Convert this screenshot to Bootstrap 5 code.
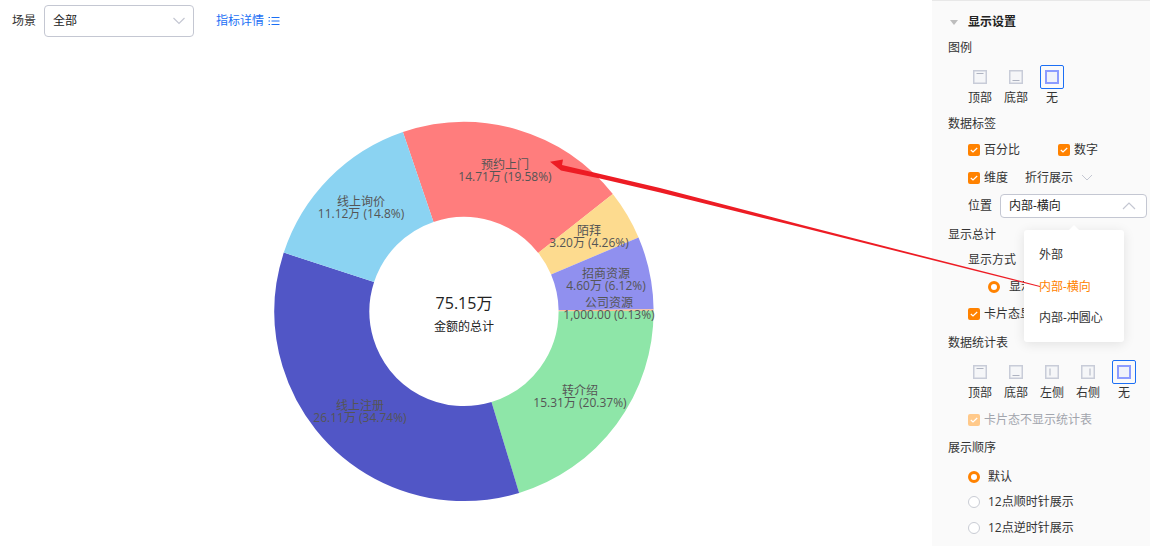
<!DOCTYPE html>
<html lang="zh">
<head>
<meta charset="utf-8">
<link href="https://cdn.jsdelivr.net/npm/bootstrap@5.3.0/dist/css/bootstrap.min.css" rel="stylesheet">
<style>
html,body{height:546px;overflow:hidden}
body{font-family:"Open Sans","Noto Sans CJK SC",sans-serif;font-size:12px;color:#333;background:#fff;position:relative}
.app-main{width:932px;flex:none}
.tool-bar{height:42px;padding:5px 0 5px 12px}
.fake-select{border:1px solid #c4c7d2;border-radius:4px;background:#fff;color:#222;display:flex;align-items:center;justify-content:space-between}
.scene-select{width:150px;height:32px;margin:0 22px 0 8px;padding:0 7px 0 8px}
.detail-link{color:#1b6ff5;text-decoration:none}
.chart-svg{display:block}
.chart-svg text{font-family:"Open Sans","Noto Sans CJK SC",sans-serif;font-size:12px;text-anchor:middle;fill:#555}
.chart-svg .total-num{font-size:16px;fill:#222}
.chart-svg .total-lbl{fill:#222}
.side-panel{width:218px;flex:none;height:546px;background:#fafafa;border-top:1px solid #e8e8e8;padding:1px 0 0 16px;overflow:hidden}
.srow{display:flex;align-items:center;white-space:nowrap}
.ind{padding-left:20px}
.panel-title{font-weight:700;height:40px;padding-left:2px;color:#222}
.panel-title i{display:block;width:0;height:0;border:4px solid transparent;border-top:5px solid #bdbdbd;border-bottom:0;margin-right:10px}
.cbx{width:12px;height:12px;border-radius:2px;background:#ff8200;margin-right:4px;display:flex;align-items:center;justify-content:center;flex:none}
.cbx.off{background:#ffc98a}
.rad{width:12px;height:12px;border-radius:50%;border:1px solid #c9ccd4;background:#fff;margin-right:8px;flex:none}
.rad.on{border:3px solid #ff8200}
.pos-icons{display:flex;padding-left:14px}
.pos-item{width:36px;display:flex;flex-direction:column;align-items:center}
.pos-box{width:24px;height:24px;display:flex;align-items:center;justify-content:center;border-radius:2px}
.pos-box.sel{border:1px solid #1b6ff5}
.pos-select{width:147px;height:24px;padding:0 10px 0 8px}
.drop-menu{position:absolute;left:1024px;top:230px;width:100px;height:112px;background:#fff;border-radius:3px;box-shadow:0 2px 12px rgba(0,0,0,.1);padding:9px 0 0 15px}
.drop-menu::before{content:"";position:absolute;left:45px;top:-5px;border:5px solid transparent;border-bottom-color:#fff;border-top:0}
.drop-menu div{height:31.5px;line-height:32px;white-space:nowrap}
.drop-menu .act{color:#ff8200}
.over-arrow{position:absolute;left:0;top:0;pointer-events:none}
.dim{color:#a2a5ad}
.r-legend{height:12px}
.r-legend-icons{margin-top:11px}
.r-label-head{height:19px;margin-top:7px}
.r33{height:33px}
.r23{height:23px}
.r25{height:25px}
.r-radio{height:29px;padding-left:40px}
.r-radio .rad{margin-right:9px}
.r-card{height:26px}
.r32{height:32px}
.r-table-icons{margin-top:1px}
.r-nostat{height:32px;margin-top:2px}
.r-order{height:24px}
.r-order-first{height:25px;margin-top:4px}
.r26{height:26px}
.w41{width:41px}
.w32{width:32px}
.w74{width:74px}
</style>
</head>
<body>
<div class="d-flex">
  <div class="app-main">
    <div class="tool-bar d-flex align-items-center">
      <span>场景</span>
      <div class="fake-select scene-select"><span>全部</span>
        <svg width="14" height="8" viewBox="0 0 14 8"><path d="M1.5 1 7 6.5 12.5 1" fill="none" stroke="#c4c7d2" stroke-width="1.2"/></svg></div>
      <a class="detail-link d-flex align-items-center" href="#">指标详情
        <svg class="ms-1" width="12" height="10" viewBox="0 0 12 10"><path d="M3.5 1.5H11.5M3.5 5H11.5M3.5 8.5H11.5M.5 1.5H2M.5 5H2M.5 8.5H2" stroke="#1b6ff5" fill="none"/></svg></a>
    </div>
    <svg class="chart-svg" width="932" height="504" viewBox="0 42 932 504">
      <g fill="none" stroke-width="95">
        <circle cx="464" cy="311.5" r="142.1" pathLength="360" stroke="#ff7d7d" stroke-dasharray="70.5 289.5" transform="rotate(-108.8 464 311.5)"/>
        <circle cx="464" cy="311.5" r="142.1" pathLength="360" stroke="#fddb8f" stroke-dasharray="15.3 344.7" transform="rotate(-38.3 464 311.5)"/>
        <circle cx="464" cy="311.5" r="142.1" pathLength="360" stroke="#9090ef" stroke-dasharray="22.3 337.7" transform="rotate(-23 464 311.5)"/>
        <circle cx="464" cy="311.5" r="142.1" pathLength="360" stroke="#ffb98a" stroke-dasharray="0.5 359.5" transform="rotate(-0.7 464 311.5)"/>
        <circle cx="464" cy="311.5" r="142.1" pathLength="360" stroke="#8ee6a8" stroke-dasharray="73.3 286.7" transform="rotate(-0.2 464 311.5)"/>
        <circle cx="464" cy="311.5" r="142.1" pathLength="360" stroke="#5156c6" stroke-dasharray="125 235" transform="rotate(73.1 464 311.5)"/>
        <circle cx="464" cy="311.5" r="142.1" pathLength="360" stroke="#8bd3f2" stroke-dasharray="53.1 306.9" transform="rotate(198.1 464 311.5)"/>
      </g>
      <text x="505" y="169">预约上门</text><text x="505" y="181">14.71万 (19.58%)</text>
      <text x="361" y="206">线上询价</text><text x="361" y="218">11.12万 (14.8%)</text>
      <text x="589" y="235">陌拜</text><text x="589" y="247">3.20万 (4.26%)</text>
      <text x="606" y="278">招商资源</text><text x="606" y="290">4.60万 (6.12%)</text>
      <text x="609" y="307">公司资源</text><text x="609" y="319">1,000.00 (0.13%)</text>
      <text x="580" y="395">转介绍</text><text x="580" y="407">15.31万 (20.37%)</text>
      <text x="360" y="410">线上注册</text><text x="360" y="422">26.11万 (34.74%)</text>
      <text class="total-num" x="464" y="309">75.15万</text>
      <text class="total-lbl" x="464" y="331">金额的总计</text>
    </svg>
  </div>
  <div class="side-panel">
    <div class="srow panel-title"><i></i>显示设置</div>
    <div class="srow r-legend">图例</div>
    <div class="pos-icons r-legend-icons">
      <div class="pos-item"><div class="pos-box"><svg width="14" height="14"><rect x=".75" y=".75" width="12.5" height="12.5" fill="#f5f6f8" stroke="#c8ccd8" stroke-width="1.5"/><path d="M3.5 3.5H10.5" stroke="#aeb3c1"/></svg></div>顶部</div>
      <div class="pos-item"><div class="pos-box"><svg width="14" height="14"><rect x=".75" y=".75" width="12.5" height="12.5" fill="#f5f6f8" stroke="#c8ccd8" stroke-width="1.5"/><path d="M3.5 10.5H10.5" stroke="#aeb3c1"/></svg></div>底部</div>
      <div class="pos-item"><div class="pos-box sel"><svg width="14" height="14"><rect x="1" y="1" width="12" height="12" fill="#f0f2fa" stroke="#8c9cff" stroke-width="2"/></svg></div>无</div>
    </div>
    <div class="srow r-label-head">数据标签</div>
    <div class="srow ind r33">
      <span class="cbx"><svg width="8" height="6" viewBox="0 0 8 6"><path d="M.8 3 3 5 7.2 1" fill="none" stroke="#fff" stroke-width="1.2"/></svg></span><span class="w74">百分比</span>
      <span class="cbx"><svg width="8" height="6" viewBox="0 0 8 6"><path d="M.8 3 3 5 7.2 1" fill="none" stroke="#fff" stroke-width="1.2"/></svg></span><span>数字</span>
    </div>
    <div class="srow ind r23">
      <span class="cbx"><svg width="8" height="6" viewBox="0 0 8 6"><path d="M.8 3 3 5 7.2 1" fill="none" stroke="#fff" stroke-width="1.2"/></svg></span><span class="w41">维度</span><span>折行展示</span>
      <svg class="ms-2" width="12" height="7" viewBox="0 0 12 7"><path d="M1 1 6 6 11 1" fill="none" stroke="#c4c7d2"/></svg>
    </div>
    <div class="srow ind r33">
      <span class="w32">位置</span>
      <div class="fake-select pos-select"><span>内部-横向</span><svg width="14" height="8" viewBox="0 0 14 8"><path d="M1 7 7 1 13 7" fill="none" stroke="#c4c7d2" stroke-width="1.2"/></svg></div>
    </div>
    <div class="srow r25">显示总计</div>
    <div class="srow ind r25">显示方式</div>
    <div class="srow r-radio"><span class="rad on"></span>显示总计</div>
    <div class="srow ind r-card"><span class="cbx"><svg width="8" height="6" viewBox="0 0 8 6"><path d="M.8 3 3 5 7.2 1" fill="none" stroke="#fff" stroke-width="1.2"/></svg></span>卡片态显示</div>
    <div class="srow r32">数据统计表</div>
    <div class="pos-icons r-table-icons">
      <div class="pos-item"><div class="pos-box"><svg width="14" height="14"><rect x=".75" y=".75" width="12.5" height="12.5" fill="#f5f6f8" stroke="#c8ccd8" stroke-width="1.5"/><path d="M3.5 3.5H10.5" stroke="#aeb3c1"/></svg></div>顶部</div>
      <div class="pos-item"><div class="pos-box"><svg width="14" height="14"><rect x=".75" y=".75" width="12.5" height="12.5" fill="#f5f6f8" stroke="#c8ccd8" stroke-width="1.5"/><path d="M3.5 10.5H10.5" stroke="#aeb3c1"/></svg></div>底部</div>
      <div class="pos-item"><div class="pos-box"><svg width="14" height="14"><rect x=".75" y=".75" width="12.5" height="12.5" fill="#f5f6f8" stroke="#c8ccd8" stroke-width="1.5"/><path d="M5 3.5V10.5" stroke="#aeb3c1"/></svg></div>左侧</div>
      <div class="pos-item"><div class="pos-box"><svg width="14" height="14"><rect x=".75" y=".75" width="12.5" height="12.5" fill="#f5f6f8" stroke="#c8ccd8" stroke-width="1.5"/><path d="M9 3.5V10.5" stroke="#aeb3c1"/></svg></div>右侧</div>
      <div class="pos-item"><div class="pos-box sel"><svg width="14" height="14"><rect x="1" y="1" width="12" height="12" fill="#f0f2fa" stroke="#8c9cff" stroke-width="2"/></svg></div>无</div>
    </div>
    <div class="srow ind dim r-nostat"><span class="cbx off"><svg width="8" height="6" viewBox="0 0 8 6"><path d="M.8 3 3 5 7.2 1" fill="none" stroke="#fff" stroke-width="1.2"/></svg></span>卡片态不显示统计表</div>
    <div class="srow r-order">展示顺序</div>
    <div class="srow ind r-order-first"><span class="rad on"></span>默认</div>
    <div class="srow ind r26"><span class="rad"></span>12点顺时针展示</div>
    <div class="srow ind r26"><span class="rad"></span>12点逆时针展示</div>
  </div>
</div>
<div class="drop-menu">
  <div>外部</div>
  <div class="act">内部-横向</div>
  <div>内部-冲圆心</div>
</div>
<svg class="over-arrow" width="1150" height="546" viewBox="0 0 1150 546">
  <polygon points="550,161.7 563,159.5 562,165 660,188 800,224.5 1040,286 1040,287 800,227 660,192.5 600,178.5 561,170.5" fill="#ed1c24"/>
</svg>
</body>
</html>
